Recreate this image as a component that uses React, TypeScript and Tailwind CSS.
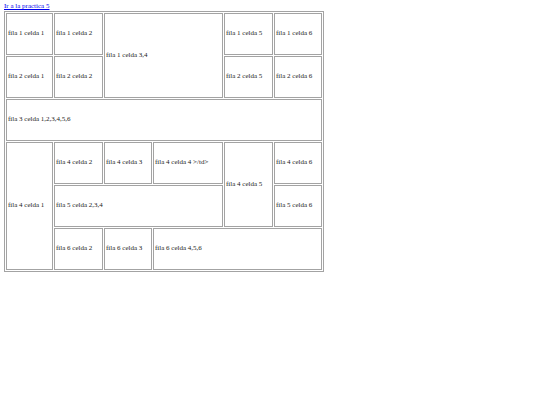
export default function App() {
  const td = "border border-[#a3a3a3] px-[1px] align-middle text-left";

  return (
    <div className="min-h-screen bg-white px-[4px] pt-[3px] font-['Liberation_Serif',serif] text-[7px] text-[#1a1a1a]">
      <a href="#" className="block w-fit leading-[7.5px] text-[#0000ee] underline">
        Ir a la practica 5
      </a>
      <table className="w-[319px] table-fixed border-separate border-spacing-[1px] border border-[#a3a3a3]">
        <colgroup>
          <col className="w-[47px]" />
          <col className="w-[49px]" />
          <col className="w-[48px]" />
          <col className="w-[70px]" />
          <col className="w-[49px]" />
          <col className="w-[48px]" />
        </colgroup>
        <tbody>
          <tr className="h-[42px]">
            <td className={td}>fila 1 celda 1</td>
            <td className={td}>fila 1 celda 2</td>
            <td className={td} colSpan={2} rowSpan={2}>
              fila 1 celda 3,4
            </td>
            <td className={td}>fila 1 celda 5</td>
            <td className={td}>fila 1 celda 6</td>
          </tr>
          <tr className="h-[42px]">
            <td className={td}>fila 2 celda 1</td>
            <td className={td}>fila 2 celda 2</td>
            <td className={td}>fila 2 celda 5</td>
            <td className={td}>fila 2 celda 6</td>
          </tr>
          <tr className="h-[42px]">
            <td className={td} colSpan={6}>
              fila 3 celda 1,2,3,4,5,6
            </td>
          </tr>
          <tr className="h-[42px]">
            <td className={td} rowSpan={3}>
              fila 4 celda 1
            </td>
            <td className={td}>fila 4 celda 2</td>
            <td className={td}>fila 4 celda 3</td>
            <td className={td}>fila 4 celda 4 &gt;/td&gt;</td>
            <td className={td} rowSpan={2}>
              fila 4 celda 5
            </td>
            <td className={td}>fila 4 celda 6</td>
          </tr>
          <tr className="h-[42px]">
            <td className={td} colSpan={3}>
              fila 5 celda 2,3,4
            </td>
            <td className={td}>fila 5 celda 6</td>
          </tr>
          <tr className="h-[42px]">
            <td className={td}>fila 6 celda 2</td>
            <td className={td}>fila 6 celda 3</td>
            <td className={td} colSpan={3}>
              fila 6 celda 4,5,6
            </td>
          </tr>
        </tbody>
      </table>
    </div>
  );
}
